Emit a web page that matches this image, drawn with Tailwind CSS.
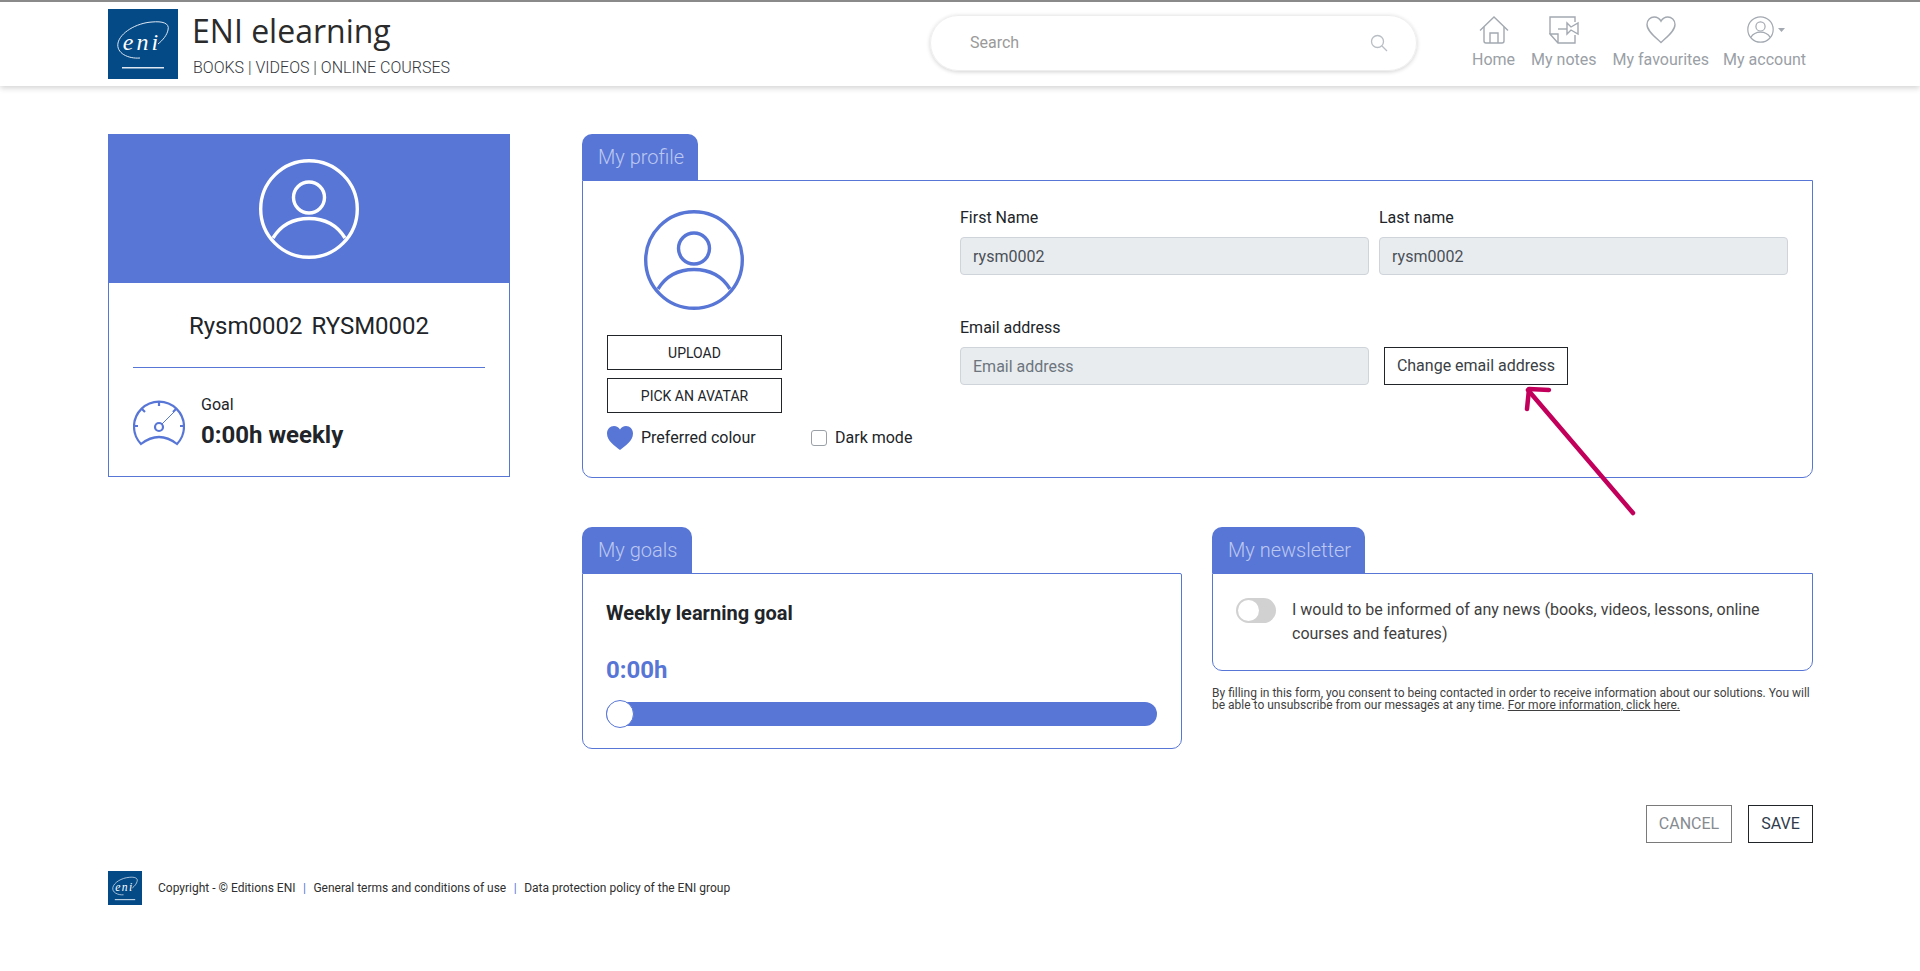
<!DOCTYPE html>
<html lang="en">
<head>
  <meta charset="UTF-8">
  <title>ENI elearning - My profile</title>
  <script src="https://cdn.jsdelivr.net/npm/@tailwindcss/browser@4"></script>
</head>
<body class="bg-white font-[Roboto,sans-serif] text-[#212529] h-[971px] overflow-hidden relative">

  <!-- header -->
  <header class="h-[86px] border-t-2 border-[#8a8a8a] bg-white shadow-[0_2px_6px_rgba(0,0,0,0.18)] pl-[108px] flex items-center">
    <div class="w-[822px] flex items-center gap-[14px] h-[70px] shrink-0">
      <svg class="w-[70px] h-[70px]" viewBox="0 0 70 70">
        <rect width="70" height="70" fill="#034a87"/>
        <path d="M32 49 C20 50 8 44 10 34 C12 24 28 14 44 13 C54 12 62 14 60 21 C59 26 55 31 50 35" fill="none" stroke="#dfe8f2" stroke-width="1"/>
        <text x="34" y="41" text-anchor="middle" fill="#fff" font-family="Liberation Serif, serif" font-style="italic" font-size="24" letter-spacing="3">eni</text>
        <rect x="14" y="58" width="42" height="1.5" fill="#dfe8f2"/>
      </svg>
      <div class="mt-[1px]">
        <div class="font-['Open_Sans',sans-serif] text-[32px] leading-[40px] text-[#2b2b2b]">ENI elearning</div>
        <div class="font-light text-base leading-5 mt-[7px] ml-[1px] text-[#33363b]">BOOKS | VIDEOS | ONLINE COURSES</div>
      </div>
    </div>
    <div class="w-[487px] h-14 rounded-full border border-[#eeeeee] shadow-[0_1px_4px_rgba(0,0,0,0.18)] flex items-center pl-[39px] pr-[28px] text-[#9a9a9a] -mt-[2px] shrink-0">
      <span class="flex-1 text-base">Search</span>
      <svg class="w-[18px] h-[18px]" viewBox="0 0 18 18" fill="none" stroke="#b9bec4" stroke-width="1.3"><circle cx="7.5" cy="7.5" r="6"/><path d="M12 12 L17 17"/></svg>
    </div>
    <nav class="ml-[55px] flex gap-4 text-base leading-5 text-[#9aa0a6] -mt-[3px]">
      <a class="flex flex-col items-center gap-[6px]">
        <svg class="w-[30px] h-[28px]" viewBox="0 0 30 28" fill="none" stroke="#a3a9b1" stroke-width="1.4"><path d="M1 14.5 L15 1 L29 14.5"/><path d="M5 11 V25 Q5 27 7 27 H23 Q25 27 25 25 V11"/><path d="M11 27 V17 H19 V27"/></svg>
        <span>Home</span>
      </a>
      <a class="flex flex-col items-center gap-[6px]">
        <svg class="w-[30px] h-[28px]" viewBox="0 0 30 28" fill="none" stroke="#a3a9b1" stroke-width="1.4"><path d="M1 18 V1 H26 V6"/><path d="M26 19 V27 H9 L1 18 H9 V27"/><path d="M9 13 H18"/><path d="M18 7 V18 L22 14 L29 18 V7 L22 11 Z"/></svg>
        <span>My notes</span>
      </a>
      <a class="flex flex-col items-center gap-[6px]">
        <svg class="w-[30px] h-[28px]" viewBox="0 0 30 28" fill="none" stroke="#a3a9b1" stroke-width="1.4"><path d="M15 26.5 C9 21 1 15 1 8.5 C1 4 4.5 1 8.2 1 C11 1 13.6 2.6 15 5.2 C16.4 2.6 19 1 21.8 1 C25.5 1 29 4 29 8.5 C29 15 21 21 15 26.5 Z"/></svg>
        <span>My favourites</span>
      </a>
      <a class="flex flex-col items-center gap-[6px] -ml-[2px]">
        <span class="flex items-center gap-1 h-[28px] pl-[2px]">
          <svg class="w-[27px] h-[27px]" viewBox="0 0 100 100" fill="none" stroke="#a3a9b1" stroke-width="4.5"><circle cx="50" cy="50" r="47"/><circle cx="50" cy="38.5" r="17"/><path d="M14 79 C22 66 35 59.5 50 59.5 C65 59.5 78 66 86 79"/></svg>
          <svg class="w-[7px] h-1" viewBox="0 0 7 4"><path d="M0 0 H7 L3.5 4 Z" fill="#a3a9b1"/></svg>
        </span>
        <span>My account</span>
      </a>
    </nav>
  </header>

  <main class="pl-[108px] pr-[107px] pt-[48px] flex gap-[72px]">
    <!-- left card -->
    <aside class="w-[402px] h-[343px] border border-[#5876d6] shrink-0">
      <div class="h-[148px] bg-[#5876d6] flex items-center justify-center">
        <svg class="w-[100px] h-[100px]" viewBox="0 0 100 100" fill="none" stroke="#fff" stroke-width="3.4"><circle cx="50" cy="50" r="48.3"/><circle cx="50" cy="38.5" r="15.5"/><path d="M14 79 C22 66 35 59.5 50 59.5 C65 59.5 78 66 86 79"/></svg>
      </div>
      <div class="px-6">
        <div class="h-[85px] pt-[2px] flex items-center justify-center text-2xl [word-spacing:3px] border-b border-[#5876d6]">Rysm0002 RYSM0002</div>
        <div class="flex items-center gap-4 pt-[29px]">
          <svg class="w-[52px] h-[46px]" viewBox="0 0 52 46" fill="none" stroke="#5876d6" stroke-width="2.2"><path d="M8 44 A25 25 0 1 1 44 44 Q26 30 8 44 Z"/><path d="M26 1 V6 M1 26 H5 M47 26 H51 M9 9 L12 12 M43 9 L40 12"/><circle cx="26" cy="27" r="4"/><path d="M29 24 L41 12" stroke-width="1"/></svg>
          <div class="-mt-[2px]">
            <div class="text-base leading-5">Goal</div>
            <div class="text-2xl font-bold leading-7 mt-[6px]">0:00h weekly</div>
          </div>
        </div>
      </div>
    </aside>

    <div class="flex-1">
      <!-- profile -->
      <div class="h-[46px] w-[116px] bg-[#5876d6] rounded-t-[10px] px-4 flex items-center whitespace-nowrap text-xl font-light text-[#bcc8f0]">My profile</div>
      <section class="h-[298px] border border-[#5876d6] rounded-b-[10px] flex pl-6 pr-6">
        <div class="w-[353px] shrink-0 pt-[29px]">
          <div class="w-[175px] flex flex-col">
            <svg class="w-[100px] h-[100px] self-center -translate-x-[1px]" viewBox="0 0 100 100" fill="none" stroke="#5876d6" stroke-width="3.4"><circle cx="50" cy="50" r="48.3"/><circle cx="50" cy="38.5" r="15.5"/><path d="M14 79 C22 66 35 59.5 50 59.5 C65 59.5 78 66 86 79"/></svg>
            <button class="h-[35px] mt-[25px] border border-[#212529] text-sm">UPLOAD</button>
            <button class="h-[35px] mt-2 border border-[#212529] text-sm">PICK AN AVATAR</button>
          </div>
          <div class="flex items-center mt-[13px] h-6 text-base">
            <svg class="w-[26px] h-[24px] mr-2" viewBox="0 0 26 24"><path d="M13 24 C8 20 0 15 0 7.5 C0 3 3.2 0 7 0 C9.5 0 11.8 1.3 13 3.5 C14.2 1.3 16.5 0 19 0 C22.8 0 26 3 26 7.5 C26 15 18 20 13 24 Z" fill="#5876d6"/></svg>
            <span class="w-[170px]">Preferred colour</span>
            <span class="w-4 h-4 border border-[#9aa0a6] rounded-[3px] mr-2"></span>
            <span>Dark mode</span>
          </div>
        </div>
        <div class="flex-1 pt-[25px]">
          <div class="grid grid-cols-2 gap-x-[10px]">
            <label class="block">
              <span class="block text-base leading-6 mb-[7px]">First Name</span>
              <input readonly value="rysm0002" class="w-full h-[38px] px-3 bg-[#e9ecef] border border-[#ced4da] rounded text-base text-[#495057]">
            </label>
            <label class="block">
              <span class="block text-base leading-6 mb-[7px]">Last name</span>
              <input readonly value="rysm0002" class="w-full h-[38px] px-3 bg-[#e9ecef] border border-[#ced4da] rounded text-base text-[#495057]">
            </label>
            <label class="block mt-[41px]">
              <span class="block text-base leading-6 mb-[7px]">Email address</span>
              <input readonly placeholder="Email address" class="w-full h-[38px] px-3 bg-[#e9ecef] border border-[#ced4da] rounded text-base placeholder:text-[#6c757d]">
            </label>
            <div class="mt-[41px] pt-[31px] pl-[5px]">
              <button class="h-[38px] w-[184px] border border-[#212529] text-base text-[#3a3f45]">Change email address</button>
            </div>
          </div>
        </div>
      </section>

      <div class="flex gap-[30px] mt-[49px]">
        <!-- goals -->
        <div class="w-[600px]">
          <div class="h-[46px] w-[110px] bg-[#5876d6] rounded-t-[10px] px-4 flex items-center whitespace-nowrap text-xl font-light text-[#bcc8f0]">My goals</div>
          <section class="h-[176px] border border-[#5876d6] rounded-b-[10px] rounded-tr-[2px] pl-[23px] pr-6 pt-[27px]">
            <div class="text-xl font-bold leading-6">Weekly learning goal</div>
            <div class="text-2xl font-bold text-[#5876d6] leading-8 mt-[29px]">0:00h</div>
            <div class="relative h-6 bg-[#5876d6] rounded-full mt-4">
              <span class="absolute left-0 -top-[2px] w-[28px] h-[28px] rounded-full bg-white border border-[#5876d6]"></span>
            </div>
          </section>
        </div>
        <!-- newsletter -->
        <div class="flex-1">
          <div class="h-[46px] w-[153px] bg-[#5876d6] rounded-t-[10px] px-4 flex items-center whitespace-nowrap text-xl font-light text-[#bcc8f0]">My newsletter</div>
          <section class="h-[98px] border border-[#5876d6] rounded-b-[10px] flex pl-[23px] pr-6 pt-6">
            <span class="relative w-10 h-[25px] rounded-full bg-[#d1d1d1] shrink-0">
              <span class="absolute left-[2px] top-[2px] w-[21px] h-[21px] rounded-full bg-white"></span>
            </span>
            <p class="ml-4 text-base leading-6 text-[#3f3f3f]">I would to be informed of any news (books, videos, lessons, online courses and features)</p>
          </section>
          <p class="text-xs leading-3 mt-4 text-[#3f3f3f]">By filling in this form, you consent to being contacted in order to receive information about our solutions. You will be able to unsubscribe from our messages at any time. <a class="underline">For more information, click here.</a></p>
        </div>
      </div>
    </div>
  </main>

  <!-- actions -->
  <div class="flex justify-end gap-4 pr-[107px] mt-[56px]">
    <button class="h-[38px] w-[86px] border border-[#7a7a7a] text-base text-[#868b90]">CANCEL</button>
    <button class="h-[38px] w-[65px] border border-[#212529] text-base text-[#2f3b4a]">SAVE</button>
  </div>

  <!-- footer -->
  <footer class="pl-[108px] mt-[28px] flex items-center gap-4 text-xs text-[#2f2f2f]">
    <svg class="w-[34px] h-[34px]" viewBox="0 0 70 70">
      <rect width="70" height="70" fill="#034a87"/>
      <path d="M32 49 C20 50 8 44 10 34 C12 24 28 14 44 13 C54 12 62 14 60 21 C59 26 55 31 50 35" fill="none" stroke="#dfe8f2" stroke-width="1.5"/>
      <text x="34" y="41" text-anchor="middle" fill="#fff" font-family="Liberation Serif, serif" font-style="italic" font-size="24" letter-spacing="3">eni</text>
      <rect x="14" y="58" width="42" height="2" fill="#dfe8f2"/>
    </svg>
    <div class="flex gap-[7.5px]">
      <span>Copyright - © Editions ENI</span><span class="text-[#5876d6]">|</span>
      <span>General terms and conditions of use</span><span class="text-[#5876d6]">|</span>
      <span>Data protection policy of the ENI group</span>
    </div>
  </footer>

  <!-- annotation arrow -->
  <svg class="absolute left-[1515px] top-[380px] w-[130px] h-[145px]" viewBox="1515 380 130 145" fill="none" stroke="#c2005c" stroke-width="4.5" stroke-linecap="round" stroke-linejoin="round">
    <path d="M1633 513 L1528 390"/><path d="M1527 409 L1529 389 L1549 390"/>
  </svg>
</body>
</html>
